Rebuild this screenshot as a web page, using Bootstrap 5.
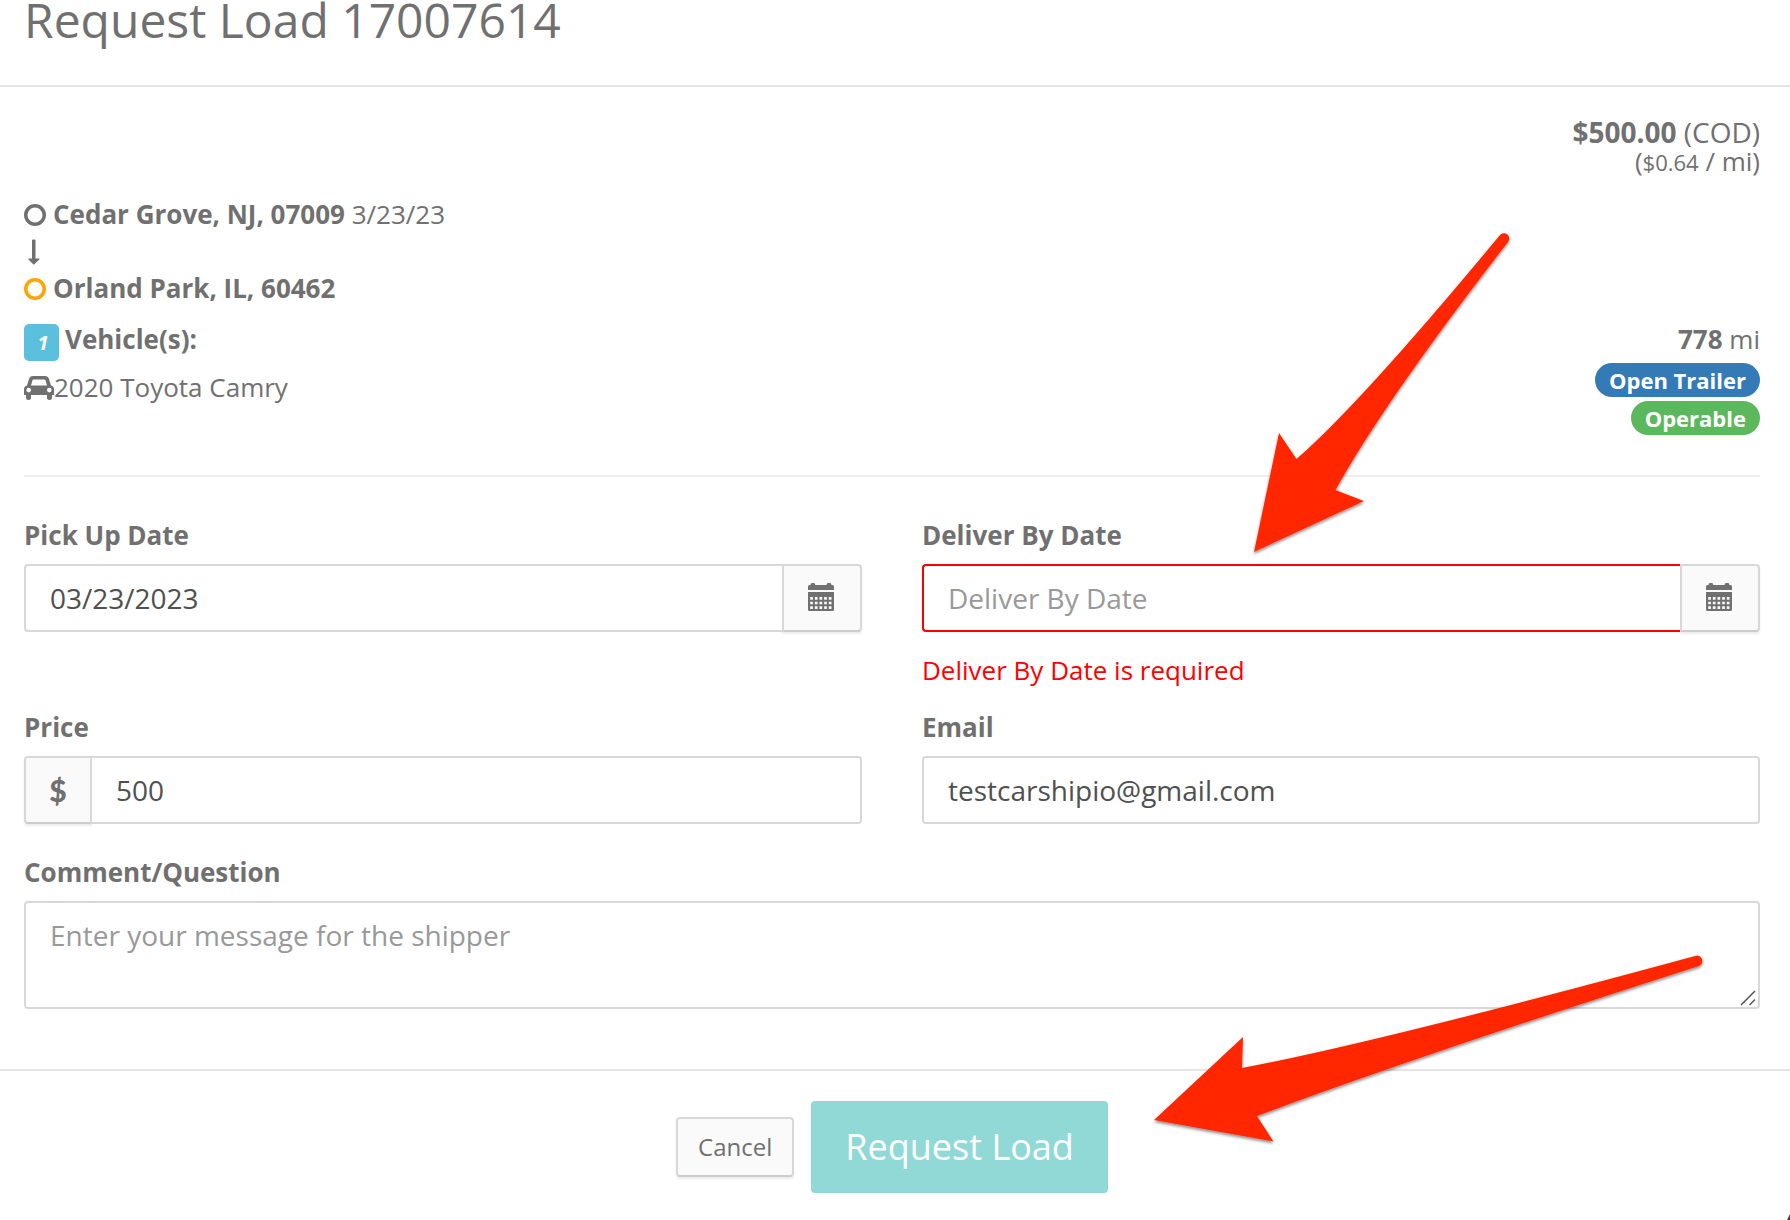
<!DOCTYPE html>
<html lang="en">
<head>
<meta charset="utf-8">
<meta name="viewport" content="width=device-width, initial-scale=1">
<title>Request Load 17007614</title>
<link href="https://cdn.jsdelivr.net/npm/bootstrap@5.3.0/dist/css/bootstrap.min.css" rel="stylesheet">
<style>
  body { font-family: "Open Sans", "Noto Sans", sans-serif; font-size: 26px; line-height: 37px; color: #707070; background: #fff; overflow-x: hidden; }
  .sheet { padding-left: 24px; padding-right: 30px; }
  .sheet-head { padding-bottom: 45px; border-bottom: 2px solid #e5e5e5; }
  .sheet-title { font-size: 48px; line-height: 40px; font-weight: 400; margin: 0; }
  .sheet-main { padding-top: 31px; padding-bottom: 60px; }
  .sheet-foot { padding-top: 30px; padding-bottom: 30px; border-top: 2px solid #e5e5e5; gap: 17px; }

  .rate { font-size: 28px; line-height: 29px; margin-bottom: 19px; }
  .rate-mile { font-size: 26px; line-height: 29px; }
  .rate-mile span { font-size: 22px; }
  .stop { gap: 7px; }
  .ring { color: #707070; flex: none; }
  .ring-drop { color: #ffa500; }
  .leg { height: 37px; padding-left: 4px; }
  .details { margin-top: 14px; }
  .vehicle-count { width: 35px; height: 37px; margin-top: 3px; margin-right: 6px; padding-left: 3px; border-radius: 5px; background: #5bc0de; color: #fff; font-size: 20px; line-height: 37px; font-weight: 700; font-style: italic; text-align: center; }
  .vehicle { margin-top: 8px; }
  .tag { font-size: 22px; line-height: 34px; font-weight: 700; padding: 0 14px; border-radius: 17px; }
  .tag-trailer { background: #337ab7; }
  .tag-running { background: #5cb85c; }
  .tags { gap: 4px; margin-top: 5px; }
  .rule { margin: 40px 0; border: 0; border-top: 2px solid #eee; opacity: 1; }

  .fields { --bs-gutter-x: 60px; }
  .form-label { font-weight: 700; margin-bottom: 10px; display: block; }
  .form-control { font-size: 28px; line-height: 40px; padding: 12px 24px; border: 2px solid #d8d8d8; border-radius: 4px; color: #505050; background: #fff; }
  .form-control::placeholder { color: #999; }
  .form-control.missing { border-color: #f00; }
  .addon { background: #fafafa; color: #707070; border: 2px solid #d8d8d8; border-bottom-color: #ccc; border-radius: 4px; box-shadow: 0 2px 2px rgba(0,0,0,.08); padding: 0; display: flex; align-items: center; justify-content: center; }
  .addon-date { width: 80px; padding: 0 2px 2px 0; }
  .addon-money { width: 68px; font-family: Lato, sans-serif; font-weight: 900; font-size: 30px; }
  .input-group > .addon-date { margin-left: -2px !important; }
  .input-group > .missing + .addon-date { margin-left: 0 !important; }
  .input-group > .missing { border-right: 0; }
  .input-group > .addon-money { margin-right: -1px; }
  .error { color: #f00; margin-top: 20px; }
  .second-row { margin-top: 20px; }
  .message { margin-top: 30px; }
  .message textarea { height: 108px; resize: none; }
  .grip { right: 4px; bottom: 3px; }

  .btn-cancel { font-size: 24px; line-height: 32px; padding: 12px 20px; border: 2px solid #d8d8d8; border-bottom-color: #ccc; border-radius: 4px; background: #fafafa; color: #707070; box-shadow: 0 2px 2px rgba(0,0,0,.08); }
  .btn-send { font-size: 36px; line-height: 48px; padding: 22px 34px; border: 0; border-radius: 4px; background: #91d9d7; color: #fff; }
  .pointers { left: 0; top: 0; pointer-events: none; }
</style>
</head>
<body>
<div class="position-relative">
  <header class="sheet sheet-head"><h1 class="sheet-title">Request Load 17007614</h1></header>

  <form>
  <main class="sheet sheet-main">
    <div class="rate text-end">
      <div><strong>$500.00</strong> (COD)</div>
      <div class="rate-mile">(<span>$0.64</span> / mi)</div>
    </div>

    <div class="stop d-flex align-items-center">
      <svg class="ring" width="22" height="22" viewBox="0 0 22 22" aria-hidden="true"><circle cx="11" cy="11" r="9.250" fill="none" stroke="currentColor" stroke-width="3.500"/></svg>
      <div><strong>Cedar Grove, NJ, 07009</strong> 3/23/23</div>
    </div>
    <div class="leg d-flex align-items-center">
      <svg width="12" height="26" viewBox="0 0 12 26" fill="#707070" aria-hidden="true"><path d="M4 1.500Q4 .5 5 .5h1.500Q7.500.5 7.500 1.500V19.500H11q.8.200.3.900L6.400 25.300q-.6.500-1.200 0L.5 20.400q-.5-.7.300-.9H4z"/></svg>
    </div>
    <div class="stop d-flex align-items-center">
      <svg class="ring ring-drop" width="22" height="22" viewBox="0 0 22 22" aria-hidden="true"><circle cx="11" cy="11" r="9.250" fill="none" stroke="currentColor" stroke-width="3.500"/></svg>
      <strong>Orland Park, IL, 60462</strong>
    </div>

    <div class="details d-flex justify-content-between align-items-start">
      <div>
        <div class="d-flex align-items-start"><span class="vehicle-count">1</span><strong>Vehicle(s):</strong></div>
        <div class="vehicle d-flex align-items-center">
          <svg width="30" height="24" viewBox="0 0 30 24" aria-hidden="true"><path fill="#707070" fill-rule="evenodd" d="M9 0H21Q24 0 25 3L27 9.500Q30 10.500 30 13V18.500Q30 19 29.300 19H28V21.500Q28 24 25.500 24T23 21.500V19H7V21.500Q7 24 4.500 24T2 21.500V19H.7Q0 19 0 18.500V13Q0 10.500 3 9.500L5 3Q6 0 9 0ZM9.700 3.500Q8.700 3.500 8.400 4.500L7 9.500H23L21.600 4.500Q21.300 3.500 20.300 3.500ZM4.700 11.800a2.300 2.300 0 1 0 0 4.600a2.300 2.300 0 1 0 0-4.600ZM25.300 11.800a2.300 2.300 0 1 0 0 4.600a2.300 2.300 0 1 0 0-4.600Z"/></svg>
          <span>2020 Toyota Camry</span>
        </div>
      </div>
      <div class="text-end">
        <div><strong>778</strong> mi</div>
        <div class="tags d-flex flex-column align-items-end">
          <span class="badge tag tag-trailer">Open Trailer</span>
          <span class="badge tag tag-running">Operable</span>
        </div>
      </div>
    </div>

    <hr class="rule">

    <div class="row fields">
      <div class="col-6">
        <label class="form-label" for="pickup">Pick Up Date</label>
        <div class="input-group">
          <input class="form-control" id="pickup" type="text" value="03/23/2023">
          <button class="addon addon-date" type="button" aria-label="Choose pick up date">
            <svg width="26" height="28" viewBox="0 0 26 28" aria-hidden="true"><g id="calendar"><path fill="#707070" d="M0 7V3.500Q0 2 1.500 2H2.500Q2.500 0 4 0H6Q7 0 7.300 2H18.500Q18.800 0 20 0H22Q23.300 0 23.500 2H24.500Q26 2 26 3.500V7ZM0 9H26V26.500Q26 28 24.500 28H1.500Q0 28 0 26.500Z"/><path stroke="#fafafa" stroke-width="2.700" stroke-dasharray="2.700 1.950" d="M2.200 15.300H23.800M2.200 20H23.800M2.200 24.600H23.800"/></g></svg>
          </button>
        </div>
      </div>
      <div class="col-6">
        <label class="form-label" for="deliver">Deliver By Date</label>
        <div class="input-group">
          <input class="form-control missing" id="deliver" type="text" placeholder="Deliver By Date" aria-describedby="deliver-error">
          <button class="addon addon-date" type="button" aria-label="Choose deliver by date">
            <svg width="26" height="28" viewBox="0 0 26 28" aria-hidden="true"><use href="#calendar"/></svg>
          </button>
        </div>
        <div class="error" id="deliver-error">Deliver By Date is required</div>
      </div>
    </div>

    <div class="row fields second-row">
      <div class="col-6">
        <label class="form-label" for="price">Price</label>
        <div class="input-group">
          <span class="addon addon-money">$</span>
          <input class="form-control" id="price" type="text" value="500">
        </div>
      </div>
      <div class="col-6">
        <label class="form-label" for="email">Email</label>
        <input class="form-control" id="email" type="email" value="testcarshipio@gmail.com">
      </div>
    </div>

    <div class="message">
      <label class="form-label" for="comment">Comment/Question</label>
      <div class="position-relative">
        <textarea class="form-control d-block" id="comment" placeholder="Enter your message for the shipper"></textarea>
        <svg class="grip position-absolute" width="16" height="16" viewBox="0 0 16 16" fill="none" stroke="#555" stroke-width="1.500" aria-hidden="true"><path d="M1 15L15 1M9.500 15L15 9.500"/></svg>
      </div>
    </div>
  </main>

  <footer class="sheet sheet-foot d-flex justify-content-center align-items-center">
    <button class="btn btn-cancel" type="button">Cancel</button>
    <button class="btn btn-send" type="button">Request Load</button>
  </footer>
  </form>

  <!-- Callout arrows over the form -->
  <svg class="pointers position-absolute" width="1790" height="1220" viewBox="0 0 1790 1220" aria-hidden="true">
    <defs><filter id="lift" x="-5%" y="-5%" width="110%" height="115%"><feDropShadow dx="0" dy="2" stdDeviation="1.500" flood-color="#000" flood-opacity=".45"/></filter></defs>
    <g fill="#ff2800" filter="url(#lift)">
      <path d="M1254 552L1279 433L1296.500 459Q1360 404 1500 235A5.200 5.200 0 0 1 1508 242Q1384 402 1335.500 490L1364 501Z"/>
      <path d="M1154 1120L1243 1037L1242 1068Q1375 1043 1695 956A5.200 5.200 0 0 1 1699 966Q1415 1057 1257 1116L1273.500 1141.500Z"/>
    </g>
    <path fill="#444" d="M1790 1214V1220H1787Z"/>
  </svg>
</div>
<script src="https://cdn.jsdelivr.net/npm/bootstrap@5.3.0/dist/js/bootstrap.bundle.min.js"></script>
</body>
</html>
